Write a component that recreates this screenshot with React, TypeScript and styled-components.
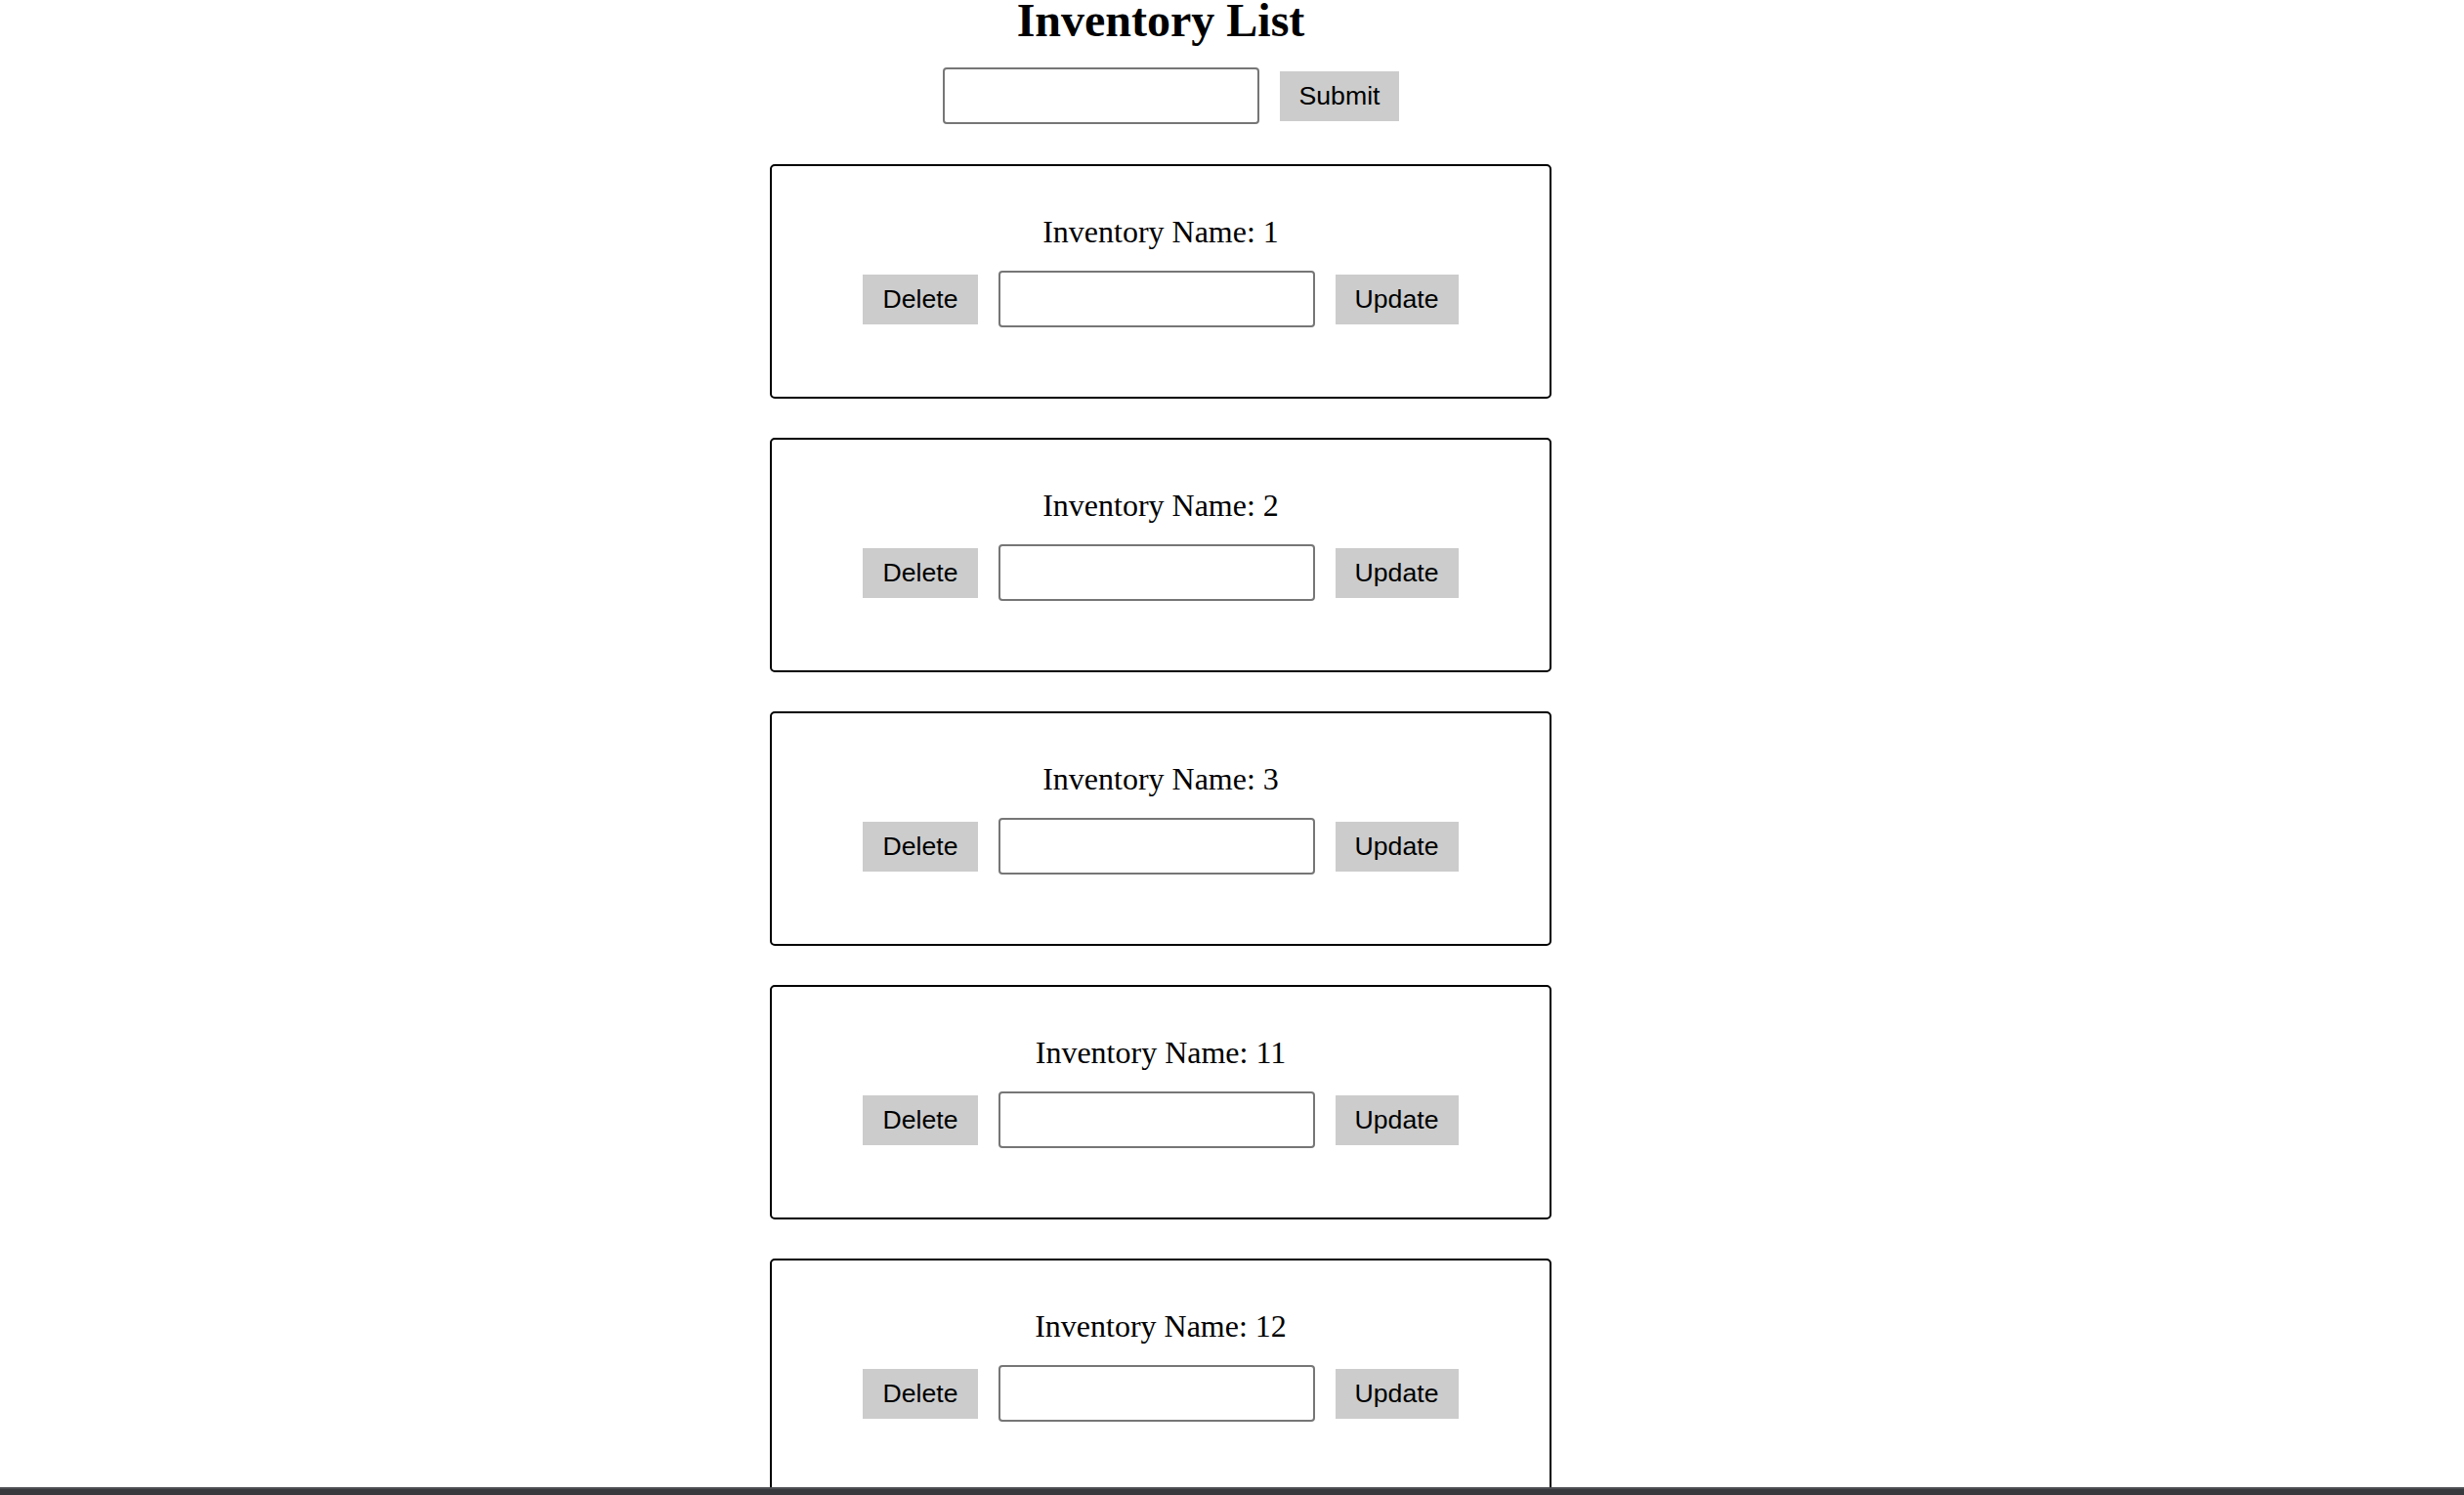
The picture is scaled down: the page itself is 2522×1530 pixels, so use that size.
import React from "react";
import styled, { createGlobalStyle } from "styled-components";

const GlobalStyle = createGlobalStyle`
  html, body {
    margin: 0;
    padding: 0;
    background: #ffffff;
  }
  body {
    font-family: "Liberation Serif", "Times New Roman", serif;
    color: #000;
  }
`;

const Page = styled.div`
  width: 2376px;
  display: flex;
  flex-direction: column;
  align-items: center;
`;

const Title = styled.h1`
  margin: 0;
  font-family: "Liberation Serif", "Times New Roman", serif;
  font-weight: 700;
  font-size: 48px;
  line-height: 42px;
  text-align: center;
`;

const AddForm = styled.form`
  display: flex;
  align-items: center;
  gap: 21px;
  margin-top: 27px;
  padding-left: 21px;
`;

const TextInput = styled.input`
  box-sizing: border-box;
  width: 324px;
  height: 58px;
  border: 2px solid #767676;
  border-radius: 4px;
  background: #fff;
  padding: 0 6px;
  font-family: "Liberation Sans", Arial, sans-serif;
  font-size: 26px;
  outline: none;
`;

const Button = styled.button`
  box-sizing: border-box;
  height: 51px;
  padding: 0 20px;
  border: none;
  border-radius: 0;
  background: #cccccc;
  color: #000;
  font-family: "Liberation Sans", Arial, sans-serif;
  font-size: 26.67px;
  line-height: 51px;
  cursor: pointer;
`;

const List = styled.div`
  display: flex;
  flex-direction: column;
  gap: 40px;
  margin-top: 41px;
`;

const Card = styled.div`
  box-sizing: border-box;
  width: 800px;
  height: 240px;
  border: 2px solid #000;
  border-radius: 5px;
  padding-top: 49px;
  display: flex;
  flex-direction: column;
  align-items: center;
  gap: 22px;
`;

const Name = styled.p`
  margin: 0;
  font-family: "Liberation Serif", "Times New Roman", serif;
  font-size: 32px;
  line-height: 36px;
`;

const Row = styled.div`
  display: flex;
  align-items: center;
  gap: 21px;
`;

const BottomBar = styled.div`
  position: fixed;
  left: 0;
  right: 0;
  bottom: 0;
  height: 8px;
  box-sizing: border-box;
  background: #38393d;
  border-top: 2px solid #4d4e53;
`;

const items = ["1", "2", "3", "11", "12"];

export default function App() {
  return (
    <>
      <GlobalStyle />
      <Page>
        <Title>Inventory List</Title>
        <AddForm onSubmit={(e) => e.preventDefault()}>
          <TextInput type="text" />
          <Button type="submit">Submit</Button>
        </AddForm>
        <List>
          {items.map((id) => (
            <Card key={id}>
              <Name>Inventory Name: {id}</Name>
              <Row>
                <Button type="button">Delete</Button>
                <TextInput type="text" />
                <Button type="button">Update</Button>
              </Row>
            </Card>
          ))}
        </List>
      </Page>
      <BottomBar />
    </>
  );
}
